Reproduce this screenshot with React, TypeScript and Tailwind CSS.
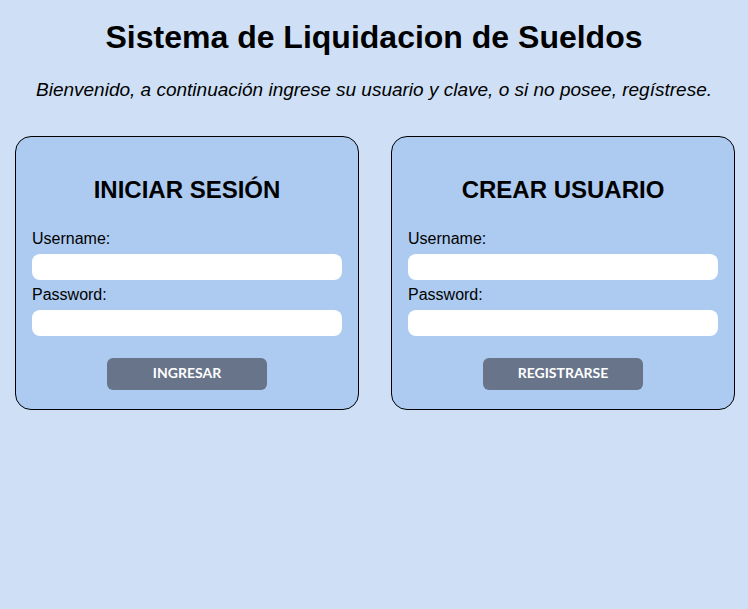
import React from "react"

type CardProps = { title: string; button: string }

function AuthCard({ title, button }: CardProps) {
  return (
    <form
      onSubmit={(e) => e.preventDefault()}
      className="w-[344px] h-[274px] flex flex-col bg-[#adcbf1] border border-black rounded-[16px] px-4 pt-[39px]"
    >
      <h2 className="text-center text-[24px] leading-[28px] font-bold text-black">{title}</h2>
      <label className="mt-[26px] text-[16px] leading-[18px] text-black">Username:</label>
      <input type="text" className="mt-[6px] h-[26px] w-full bg-white rounded-[8px] px-2 outline-none" />
      <label className="mt-[6px] text-[16px] leading-[18px] text-black">Password:</label>
      <input type="password" className="mt-[6px] h-[26px] w-full bg-white rounded-[8px] px-2 outline-none" />
      <div className="flex justify-center mt-[22px]">
        <button
          type="submit"
          className="w-[160px] h-[32px] pb-[3px] bg-[#67748a] rounded-[6px] text-white text-[14px] font-bold font-['Lato',sans-serif]"
        >
          {button}
        </button>
      </div>
    </form>
  )
}

export default function App() {
  return (
    <div className="min-h-screen w-full bg-[#cfe0f6] font-['Liberation_Sans',Arial,sans-serif] text-black">
      <h1 className="pt-[19px] text-center text-[32px] leading-[37px] font-bold">
        Sistema de Liquidacion de Sueldos
      </h1>
      <p className="mt-[23px] text-center text-[19px] leading-[22px] italic">
        Bienvenido, a continuación ingrese su usuario y clave, o si no posee, regístrese.
      </p>
      <div className="mt-[35px] flex pl-[15px] gap-[32px]">
        <AuthCard title="INICIAR SESIÓN" button="INGRESAR" />
        <AuthCard title="CREAR USUARIO" button="REGISTRARSE" />
      </div>
    </div>
  )
}
